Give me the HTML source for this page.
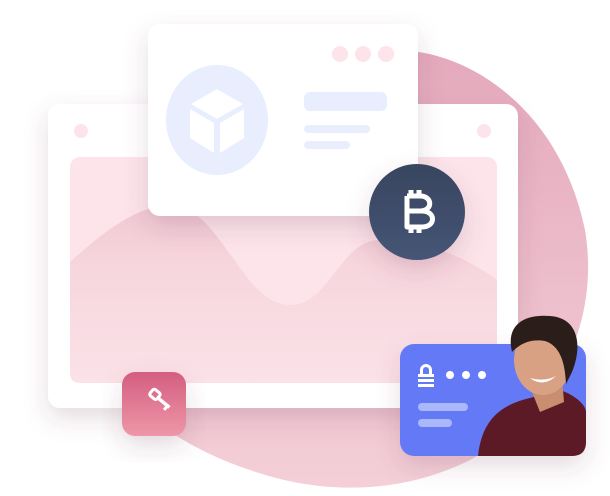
<!DOCTYPE html>
<html><head><style>
html,body{margin:0;padding:0;background:#fff;width:610px;height:496px;overflow:hidden;position:relative;font-family:"Liberation Sans",sans-serif}
.a{position:absolute}
</style></head><body>
<svg class="a" style="left:0;top:0" width="610" height="496" viewBox="0 0 610 496">
<defs>
<linearGradient id="bl" x1="0" y1="0" x2="0" y2="1"><stop offset="0" stop-color="#e4a9bc"/><stop offset="1" stop-color="#f4cfd8"/></linearGradient>
<linearGradient id="kg" x1="0" y1="0" x2="0" y2="1"><stop offset="0" stop-color="#d45e80"/><stop offset="1" stop-color="#ee97a8"/></linearGradient>
<linearGradient id="bt" x1="0" y1="0" x2="0" y2="1"><stop offset="0" stop-color="#38455f"/><stop offset="1" stop-color="#465576"/></linearGradient>
<linearGradient id="wv" x1="0" y1="0" x2="0" y2="1"><stop offset="0" stop-color="#f0c8d2"/><stop offset="0.35" stop-color="#f7d6de"/><stop offset="1" stop-color="#fbe2e8"/></linearGradient>
<filter id="sh" x="-30%" y="-30%" width="160%" height="170%"><feDropShadow dx="0" dy="10" stdDeviation="12" flood-color="#6a4050" flood-opacity="0.18"/></filter>
</defs>
<path d="M395 50 C470 50 560 110 585 230 C600 320 560 410 470 460 C400 495 320 495 250 470 C190 450 150 420 130 400 L300 200 C320 90 350 50 395 50 Z" fill="url(#bl)"/>
<rect x="48" y="104" width="470" height="304" rx="12" fill="#fff" filter="url(#sh)"/>
<rect x="70" y="157" width="427" height="226" rx="10" fill="#fce4ea"/>
<path d="M70 262 C100 235 130 210 165 205 C220 200 240 305 290 305 C330 305 340 240 380 240 C430 240 470 260 497 280 L497 373 Q497 383 487 383 L80 383 Q70 383 70 373 Z" fill="url(#wv)"/>
<circle cx="81" cy="131" r="7" fill="#fce4ea"/><circle cx="484" cy="131" r="7" fill="#fce4ea"/>
<rect x="148" y="24" width="270" height="192" rx="12" fill="#fff" filter="url(#sh)"/>
<circle cx="340" cy="54" r="8" fill="#fde3ea"/><circle cx="363" cy="54" r="8" fill="#fde3ea"/><circle cx="386" cy="54" r="8" fill="#fde3ea"/>
<ellipse cx="217" cy="120" rx="51" ry="55" fill="#e8eefd"/>
<path d="M217 89 L243 104 L217 119 L191 104 Z M190 109 L214 123 L214 153 L190 138 Z M244 109 L220 123 L220 153 L244 138 Z" fill="#fff"/>
<rect x="304" y="92" width="83" height="19" rx="6" fill="#e8eefd"/>
<rect x="304" y="125" width="66" height="8" rx="4" fill="#e8eefd"/>
<rect x="304" y="141" width="46" height="8" rx="4" fill="#e8eefd"/>
<circle cx="417" cy="212" r="48" fill="url(#bt)" filter="url(#sh)"/>
<path d="M407 196 L420 196 C433 196 433 211 420 211 L407 211 M407 211 L422 211 C436 211 436 227 422 227 L407 227 Z M407 196 L407 227 M411 190 V196 M419 190 V196 M411 227 V233 M419 227 V233" fill="none" stroke="#fff" stroke-width="5" stroke-linejoin="round"/>
<rect x="122" y="372" width="64" height="64" rx="13" fill="url(#kg)" filter="url(#sh)"/>
<g transform="translate(154 404) rotate(40)"><rect x="-10" y="-12" width="9" height="8" rx="2" fill="none" stroke="#fff" stroke-width="3"/><rect x="-2" y="-9" width="16" height="3.5" fill="#fff"/><rect x="10" y="-9" width="3" height="7" fill="#fff"/></g>
<rect x="400" y="344" width="186" height="112" rx="14" fill="#6479f6" filter="url(#sh)"/>
<path d="M420 370 a6 6 0 0 1 12 0 v4 h-3 v-4 a3 3 0 0 0 -6 0 v4 h-3 Z" fill="#fff"/>
<rect x="418" y="374" width="16" height="3" fill="#fff"/><rect x="418" y="379" width="16" height="3" fill="#fff"/><rect x="418" y="384" width="16" height="3" fill="#fff"/>
<circle cx="450" cy="375" r="4" fill="#fff"/><circle cx="466" cy="375" r="4" fill="#fff"/><circle cx="482" cy="375" r="4" fill="#fff"/>
<rect x="418" y="403" width="50" height="8" rx="4" fill="#abb7fb"/>
<rect x="418" y="419" width="34" height="8" rx="4" fill="#abb7fb"/>
<path d="M478 456 C482 420 500 405 530 398 L560 390 C575 395 586 405 586 412 V442 Q586 456 572 456 Z" fill="#5b1a26"/>
<path d="M528 382 L562 378 L564 402 L540 412 Z" fill="#c98d70"/>
<ellipse cx="543" cy="360" rx="29" ry="35" fill="#d9a184"/>
<path d="M512 352 C505 322 528 314 550 316 C580 318 582 348 572 372 L566 384 C565 362 560 346 545 341 C528 338 518 346 512 352 Z" fill="#2b1e1a"/>
<path d="M530 378 Q543 388 556 376 Q545 382 530 378 Z" fill="#fff"/>
</svg>
</body></html>
